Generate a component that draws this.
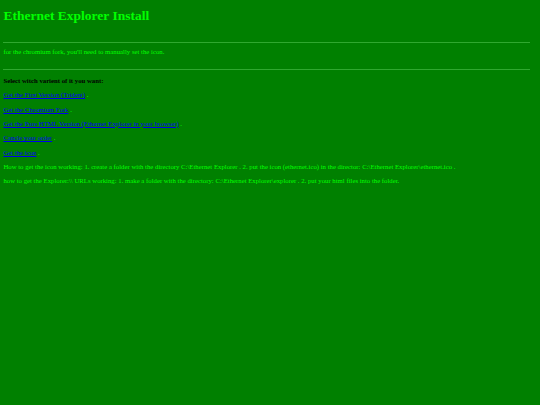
const links = [
  "Get the First Version (Trident)",
  "Get the Chromium Fork",
  "Get the Pure HTML Version (Ethernet Explorer in your browser)",
  "Cancle your order",
  "Get the icon",
];

export default function App() {
  return (
    <div
      className="min-h-[405px] w-full bg-[#008000] px-[3.4px] pt-[8px] text-[6.75px] leading-[7.76px] text-[#00ff00]"
      style={{ fontFamily: '"Liberation Serif", "Times New Roman", serif' }}>
      <h1 className="text-[13.5px] leading-[15.5px] font-bold text-[#00ff00]">
        Ethernet Explorer Install
      </h1>
      <div className="mt-[18px] h-px w-[527px] bg-[#2fa82f]" />
      <p className="mt-[5.3px]">
        for the chromium fork, you'll need to manually set the icon.
      </p>
      <div className="mt-[13.7px] h-px w-[527px] bg-[#2fa82f]" />
      <p className="mt-[6.5px] font-bold text-black">
        Select witch varient of it you want:
      </p>
      {links.map(label => (
        <p key={label} className="mt-[6.64px]">
          <a href="#" className="text-[#0000ee] underline">
            {label}
          </a>
          <span> .</span>
        </p>
      ))}
      <p className="mt-[6.64px]">
        How to get the icon working: 1. create a folder with the directory
        C:\Ethernet Explorer . 2. put the icon (ethernet.ico) in the director:
        C:\Ethernet Explorer\ethernet.ico .
      </p>
      <p className="mt-[6.64px]">
        how to get the Explorer:\\ URLs working: 1. make a folder with the
        directory: C:\Ethernet Explorer\explorer . 2. put your html files into
        the folder.
      </p>
    </div>
  );
}
